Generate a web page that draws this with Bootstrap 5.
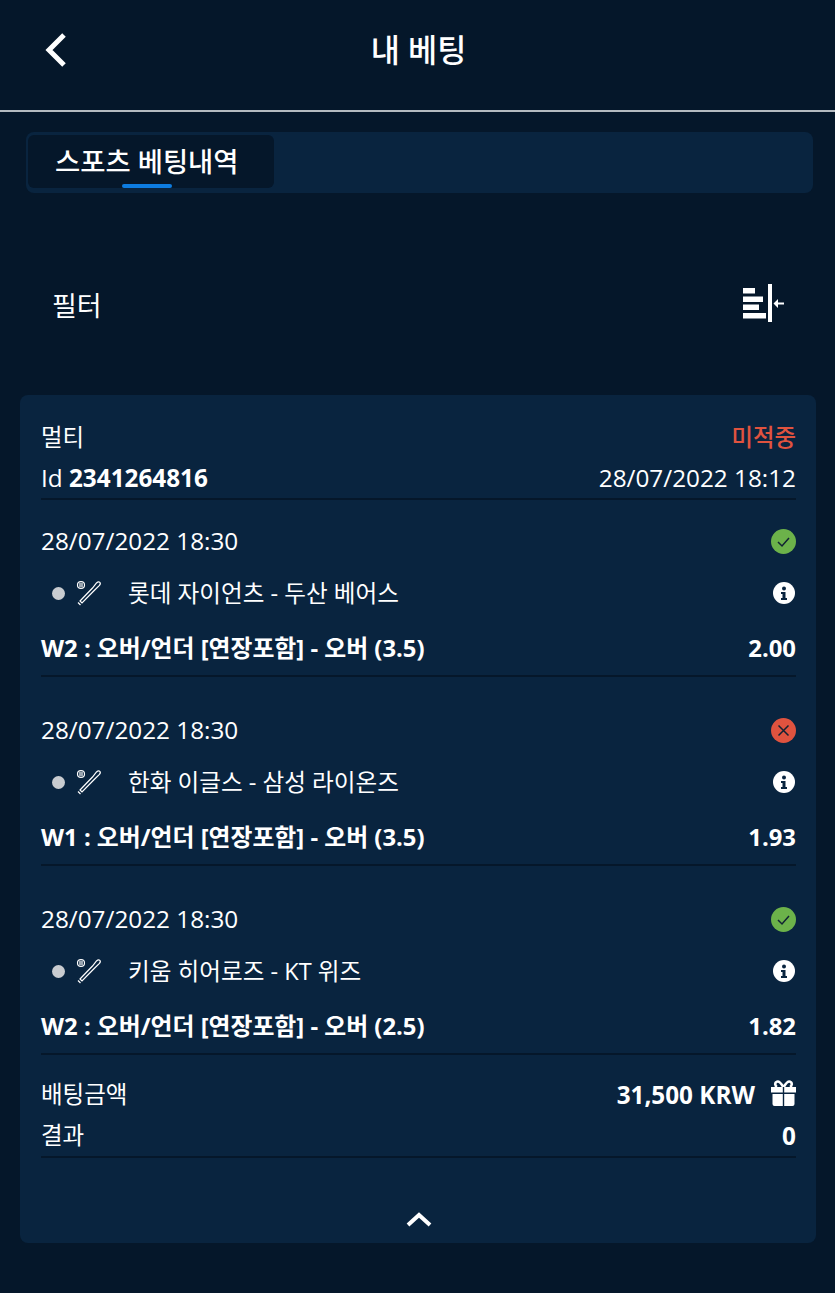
<!DOCTYPE html>
<html lang="ko">
<head>
  <meta charset="UTF-8" />
  <meta name="viewport" content="width=device-width, initial-scale=1" />
  <title>내 베팅</title>
  <link href="https://cdn.jsdelivr.net/npm/bootstrap@5.3.0/dist/css/bootstrap.min.css" rel="stylesheet" />
  <style>
    html, body { height: 100%; }
    body { background: #05172a; color: #fff; font-family: "Open Sans", "Noto Sans CJK KR", sans-serif; font-size: 24.3px; line-height: 1.2; overflow: hidden; }
    .top-head { height: 112px; padding: 0 44px 10px; border-bottom: 2px solid #b4bac0; position: relative; }
    .top-title { font-size: 31.7px; font-weight: 500; flex: 1; text-align: center; padding-right: 22px; }
    .tab-bar { height: 61px; margin: 20px 22px 0 26px; background: #09243f; border-radius: 8px; padding: 3px 2px 5px; }
    .tab-active { width: 246px; background: #05172a; border-radius: 6px; font-size: 27.4px; font-weight: 500; padding: 11px 0 0 27px; position: relative; }
    .tab-active::after { content: ""; position: absolute; left: 94px; bottom: 0; width: 50px; height: 4px; background: #0d7ce0; border-radius: 2px; }
    .filter-row { height: 202px; padding: 24px 51px 0 52px; }
    .filter-label { font-size: 27px; }
    .filter-ic { margin-top: -6px; }
    .bet-card { margin: 0 19px 0 20px; height: 848px; background: #09243f; border-radius: 8px; padding: 28px 20px 0 21px; }
    .line-row { height: 41px; }
    .line-first { height: 40px; font-size: 23.4px; }
    .line-sep { height: 37px; border-bottom: 2px solid #05172a; }
    .lost { color: #e0533f; font-weight: 500; }
    .leg { height: 189px; padding-top: 20px; }
    .leg-last { height: 177px; }
    .leg-date { height: 42px; }
    .leg-match { height: 62px; padding-left: 11px; }
    .leg-pick { height: 53px; font-size: 23.85px; font-weight: 700; border-bottom: 2px solid #05172a; padding-bottom: 3px; }
    .leg-dot { width: 13px; height: 13px; border-radius: 50%; background: #c9ccd0; margin-right: 11px; }
    .leg-teams { margin-left: 26px; font-size: 23.6px; }
    .info-ic { margin-right: 1px; }
    .sum-block { padding-top: 25px; }
    .sum-label { font-size: 23.5px; }
    .sum-end { height: 37px; border-bottom: 2px solid #05172a; }
    .more-btn { height: 85px; padding-top: 53px; }
    .gift-gap { gap: 16px; }
  </style>
</head>
<body>

<header class="top-head d-flex align-items-center">
  <svg width="24" height="34" viewBox="0 0 24 34"><path d="M20 2 5 17l15 15" fill="none" stroke="#fff" stroke-width="5"/></svg>
  <div class="top-title">내 베팅</div>
</header>

<div class="tab-bar d-flex">
  <div class="tab-active">스포츠 베팅내역</div>
</div>

<div class="filter-row d-flex justify-content-between align-items-center">
  <span class="filter-label">필터</span>
  <svg class="filter-ic" width="41" height="38" viewBox="0 0 41 38" fill="#fff">
    <rect x="0" y="4" width="12" height="5.500"/><rect x="0" y="12.500" width="20" height="5.500"/><rect x="0" y="20.500" width="16" height="5.500"/><rect x="0" y="29" width="23" height="5.500"/>
    <rect x="25" y="0" width="4" height="38"/>
    <path d="M35 18.500h6v2h-6v3.500l-4.500-4.500 4.500-4.500z"/>
  </svg>
</div>

<main class="bet-card">
  <div class="line-row line-first d-flex justify-content-between">
    <span>멀티</span><span class="lost">미적중</span>
  </div>
  <div class="line-sep d-flex justify-content-between">
    <span>Id <b>2341264816</b></span><span>28/07/2022 18:12</span>
  </div>
  <div id="legs"></div>
  <div class="sum-block">
    <div class="line-row d-flex justify-content-between">
      <span class="sum-label">배팅금액</span>
      <span class="d-flex gift-gap"><b>31,500 KRW</b>
        <svg width="25" height="26" viewBox="0 0 25 26" fill="#fff"><path d="M0 7h11.800v5.500H0zM13.200 7H25v5.500H13.200zM1.500 14h10.300v12H3.500a2 2 0 0 1-2-2zM13.200 14h10.300v10a2 2 0 0 1-2 2h-8.300z"/><path d="M12 6.500C9 1.500 7 1 5.500 1.800 3.500 2.800 4 6 6 7M13 6.500c3-5 5-5.500 6.500-4.700 2 1 1.500 4.200-.5 5.200" fill="none" stroke="#fff" stroke-width="2.600"/></svg>
      </span>
    </div>
    <div class="sum-end d-flex justify-content-between"><span class="sum-label">결과</span><b>0</b></div>
  </div>
  <div class="more-btn d-flex justify-content-center">
    <svg width="26" height="16" viewBox="0 0 26 16"><path d="M2 14 13 4l11 10" fill="none" stroke="#fff" stroke-width="4"/></svg>
  </div>
</main>

<script src="https://cdn.jsdelivr.net/npm/bootstrap@5.3.0/dist/js/bootstrap.bundle.min.js"></script>
<script>
const legs = [
  { win: true, teams: '롯데 자이언츠 - 두산 베어스', pick: 'W2 : 오버/언더 [연장포함] - 오버 (3.5)', odds: '2.00' },
  { win: false, teams: '한화 이글스 - 삼성 라이온즈', pick: 'W1 : 오버/언더 [연장포함] - 오버 (3.5)', odds: '1.93' },
  { win: true, teams: '키움 히어로즈 - KT 위즈', pick: 'W2 : 오버/언더 [연장포함] - 오버 (2.5)', odds: '1.82' }
];

const okIcon = '<svg width="25" height="25" viewBox="0 0 25 25"><circle cx="12.500" cy="12.500" r="12.500" fill="#6cb24a"/><path d="M7 13l4 4 7-8" fill="none" stroke="#123" stroke-width="1.500"/></svg>';
const noIcon = '<svg width="25" height="25" viewBox="0 0 25 25"><circle cx="12.500" cy="12.500" r="12.500" fill="#e0533f"/><path d="M7.500 7.500l10 10m0-10l-10 10" fill="none" stroke="#123" stroke-width="1.500"/></svg>';
const infoIcon = '<svg class="info-ic" width="22" height="22" viewBox="0 0 22 22"><circle cx="11" cy="11" r="11" fill="#fff"/><circle cx="11" cy="6.500" r="2" fill="#09243f"/><path d="M8 10h4.500v6H14v2H8v-2h1.500v-4H8z" fill="#09243f"/></svg>';
const batIcon = '<svg width="26" height="26" viewBox="0 0 26 26" fill="none" stroke="#fff" stroke-width="1.200"><circle cx="5" cy="5" r="3.500"/><path d="M4 2.500v5M6 2.500v5"/><path d="M4 21 16.500 8 20.500 3q2-1.800 3.300-.6t-.6 3.300l-5 4.800L6 23zM2 22.500l2.500 2.500"/></svg>';

document.getElementById('legs').innerHTML = legs.map((leg, i) => `
  <div class="leg ${i === 2 ? 'leg-last' : ''}">
    <div class="leg-date d-flex justify-content-between align-items-center">
      <span>28/07/2022 18:30</span>${leg.win ? okIcon : noIcon}
    </div>
    <div class="leg-match d-flex align-items-center">
      <span class="leg-dot"></span>${batIcon}
      <span class="leg-teams flex-grow-1">${leg.teams}</span>${infoIcon}
    </div>
    <div class="leg-pick d-flex justify-content-between align-items-center">
      <span>${leg.pick}</span><span>${leg.odds}</span>
    </div>
  </div>`).join('');
</script>
</body>
</html>
